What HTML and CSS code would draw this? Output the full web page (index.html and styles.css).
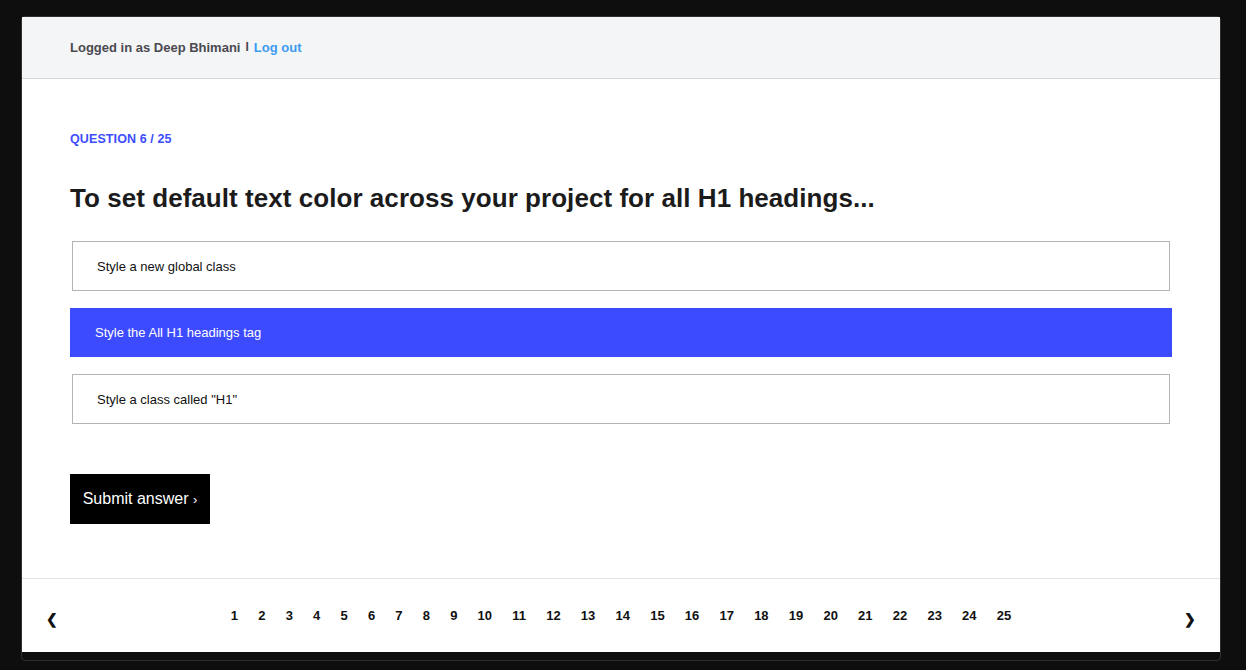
FILE: index.html
```html
<!DOCTYPE html>
<html>
<head>
<meta charset="utf-8">
<link rel="stylesheet" href="styles.css">
</head>
<body>
<div class="frame">
  <div class="panel">
    <header class="topbar">
      <span class="user">Logged in as Deep Bhimani</span>
      <span class="sep">I</span>
      <a class="logout" href="#">Log out</a>
    </header>
    <main class="quiz">
      <div class="label">QUESTION 6 / 25</div>
      <h1 class="question">To set default text color across your project for all H1 headings...</h1>
      <div class="options">
        <div class="option">Style a new global class</div>
        <div class="option selected">Style the All H1 headings tag</div>
        <div class="option">Style a class called "H1"</div>
      </div>
      <button class="submit">Submit answer <span class="chev">›</span></button>
    </main>
    <footer class="pager">
      <span class="arrow">❮</span>
      <div class="pages">
        <span>1</span><span>2</span><span>3</span><span>4</span><span>5</span><span>6</span><span>7</span><span>8</span><span>9</span><span>10</span><span>11</span><span>12</span><span>13</span><span>14</span><span>15</span><span>16</span><span>17</span><span>18</span><span>19</span><span>20</span><span>21</span><span>22</span><span>23</span><span>24</span><span>25</span>
      </div>
      <span class="arrow">❯</span>
    </footer>
  </div>
</div>
</body>
</html>
```
FILE: styles.css
```css
html, body {
  margin: 0;
  padding: 0;
  background: #0e0e0e;
  font-family: "Liberation Sans", Arial, sans-serif;
}
.frame {
  margin: 16px 0 0 21px;
  width: 1198px;
  height: 643px;
  border: 1px solid #2f2f2f;
  border-radius: 4px;
  background: #0e0e0e;
}
.panel {
  background: #fff;
  height: 635px;
  display: flex;
  flex-direction: column;
}
.topbar {
  height: 61px;
  background: #f4f5f7;
  border-bottom: 1px solid #d8d9dc;
  display: flex;
  align-items: center;
  padding: 0 48px;
  font-size: 13px;
  font-weight: bold;
}
.user { color: #4a4a4f; }
.sep {
  color: #4a4a4f;
  font-weight: bold;
  font-size: 12px;
  margin: -2px 5px 0 5px;
}
.logout {
  color: #3d9bf0;
  text-decoration: none;
}
.quiz {
  flex: 1;
  padding: 0 48px;
}
.label {
  margin-top: 53px;
  color: #3d4dff;
  font-size: 12.5px;
  font-weight: bold;
  letter-spacing: 0.1px;
}
.question {
  margin: 37px 0 0 0;
  font-size: 26px;
  font-weight: bold;
  color: #1b1b1b;
  letter-spacing: 0.05px;
}
.options {
  margin-top: 27px;
  display: flex;
  flex-direction: column;
  gap: 17px;
}
.option {
  margin: 0 2px;
  height: 48px;
  border: 1px solid #b4b4b4;
  display: flex;
  align-items: center;
  padding-left: 24px;
  font-size: 13px;
  color: #111;
}
.option.selected {
  margin: 0;
  height: 49px;
  border: none;
  background: #3d4bff;
  color: #fff;
  padding-left: 25px;
}
.submit {
  margin-top: 50px;
  width: 140px;
  height: 50px;
  background: #000;
  color: #fff;
  border: none;
  font-family: "Liberation Sans", Arial, sans-serif;
  font-size: 16px;
  padding: 0;
}
.chev { font-size: 13px; }
.pager {
  height: 73px;
  border-top: 1px solid #dde4e8;
  display: flex;
  align-items: center;
  justify-content: space-between;
  padding: 0 24px;
  font-weight: bold;
  font-size: 13px;
  color: #111;
}
.arrow {
  font-size: 14px;
  margin-top: 6px;
  width: 12px;
  text-align: center;
}
.pages {
  display: flex;
  gap: 20.2px;
  margin-top: 0;
}
```
